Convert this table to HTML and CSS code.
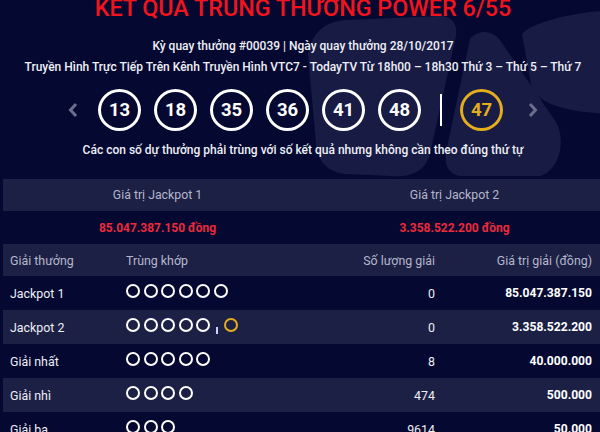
FILE: index.html
```html
<!DOCTYPE html>
<html lang="vi">
<head>
<meta charset="utf-8">
<title>Kết quả Power 6/55</title>
<link rel="stylesheet" href="styles.css">
</head>
<body>
<div class="page">
  <svg class="deco" width="600" height="432" viewBox="0 0 600 432" aria-hidden="true">
    <path d="M308,60 C312,38 325,28 345,26 L440,22 C452,22 458,30 456,42 L430,160 C425,178 410,184 390,182 L345,180 C328,178 318,168 316,150 Z" fill="#181b44"/>
    <path d="M470,45 C478,35 492,36 500,46 L556,128 C566,146 560,176 540,182 L460,182 C448,180 444,170 446,158 Z" fill="#181b44"/>
    <path d="M522,40 C530,30 560,22 590,18 L610,16 L610,120 L585,118 C560,115 540,108 532,96 Z" fill="#181b44"/>
  </svg>
  <div class="content">
    <h1 class="title">KẾT QUẢ TRÚNG THƯỞNG POWER 6/55</h1>
    <p class="info">Kỳ quay thưởng #00039 | Ngày quay thưởng 28/10/2017</p>
    <p class="info">Truyền Hình Trực Tiếp Trên Kênh Truyền Hình VTC7 - TodayTV Từ 18h00 – 18h30 Thứ 3 – Thứ 5 – Thứ 7</p>
    <div class="balls">
      <svg class="arrow arrow-left" width="10" height="16" viewBox="0 0 10 16"><path d="M8,2 L2.5,8 L8,14" fill="none" stroke="#6b6e8c" stroke-width="3"/></svg>
      <div class="ball-list">
        <span class="ball">13</span>
        <span class="ball">18</span>
        <span class="ball">35</span>
        <span class="ball">36</span>
        <span class="ball">41</span>
        <span class="ball">48</span>
      </div>
      <span class="sep"></span>
      <span class="ball ball-gold">47</span>
      <svg class="arrow arrow-right" width="10" height="16" viewBox="0 0 10 16"><path d="M2,2 L7.5,8 L2,14" fill="none" stroke="#6b6e8c" stroke-width="3"/></svg>
    </div>
    <p class="note">Các con số dự thưởng phải trùng với số kết quả nhưng không cần theo đúng thứ tự</p>

    <div class="jp-head">
      <div>Giá trị Jackpot 1</div>
      <div>Giá trị Jackpot 2</div>
    </div>
    <div class="jp-values">
      <div>85.047.387.150 đồng</div>
      <div>3.358.522.200 đồng</div>
    </div>

    <div class="table">
      <div class="row row-head">
        <div>Giải thưởng</div>
        <div>Trùng khớp</div>
        <div class="num">Số lượng giải</div>
        <div class="num">Giá trị giải (đồng)</div>
      </div>
      <div class="row">
        <div>Jackpot 1</div>
        <div class="dots"><i></i><i></i><i></i><i></i><i></i><i></i></div>
        <div class="num">0</div>
        <div class="num val">85.047.387.150</div>
      </div>
      <div class="row alt">
        <div>Jackpot 2</div>
        <div class="dots"><i></i><i></i><i></i><i></i><i></i><b class="bar"></b><i class="gold"></i></div>
        <div class="num">0</div>
        <div class="num val">3.358.522.200</div>
      </div>
      <div class="row">
        <div>Giải nhất</div>
        <div class="dots"><i></i><i></i><i></i><i></i><i></i></div>
        <div class="num">8</div>
        <div class="num val">40.000.000</div>
      </div>
      <div class="row alt">
        <div>Giải nhì</div>
        <div class="dots"><i></i><i></i><i></i><i></i></div>
        <div class="num">474</div>
        <div class="num val">500.000</div>
      </div>
      <div class="row">
        <div>Giải ba</div>
        <div class="dots"><i></i><i></i><i></i></div>
        <div class="num">9614</div>
        <div class="num val">50.000</div>
      </div>
    </div>
  </div>
</div>
</body>
</html>
```

FILE: styles.css
```css
html, body {
  margin: 0;
  padding: 0;
  background: #050830;
  overflow: hidden;
}
body {
  font-family: Roboto, "Noto Sans", sans-serif;
  color: #eceef5;
  width: 600px;
  height: 432px;
}
.page {
  position: relative;
  width: 600px;
  margin-left: 3px;
}
.deco {
  position: absolute;
  left: -3px;
  top: 0;
  z-index: 0;
}
.content {
  position: relative;
  z-index: 1;
}
.title {
  margin: -6px 0 0;
  font-size: 23.3px;
  line-height: 28px;
  font-weight: 500;
  color: #f2141c;
  text-align: center;
}
.info {
  margin: 0;
  font-size: 12px;
  line-height: 21px;
  font-weight: 500;
  text-align: center;
  color: #eef0f7;
}
.title + .info {
  margin-top: 14px;
}
.balls {
  display: flex;
  align-items: center;
  justify-content: center;
  margin-top: 11px;
  height: 42px;
}
.arrow {
  display: block;
}
.arrow-left {
  margin-right: 20px;
}
.arrow-right {
  margin-left: 25px;
}
.ball-list {
  display: flex;
  gap: 13px;
}
.ball {
  box-sizing: border-box;
  width: 43px;
  height: 42px;
  border: 3px solid #ffffff;
  border-radius: 50%;
  display: flex;
  align-items: center;
  justify-content: center;
  font-size: 18.5px;
  font-weight: 700;
  color: #ffffff;
}
.ball-gold {
  border-color: #e3ad1c;
  color: #e3ad1c;
}
.sep {
  width: 2px;
  height: 32px;
  background: #ffffff;
  margin: 0 18px 0 19px;
}
.note {
  margin: 10px 0 0;
  font-size: 12px;
  line-height: 18px;
  font-weight: 500;
  text-align: center;
  color: #eef0f7;
}
.jp-head {
  margin-top: 20px;
  height: 32px;
  background: #1d2045;
  display: grid;
  grid-template-columns: 1fr 1fr;
  padding-left: 6px;
  align-items: center;
  text-align: center;
  font-size: 12.3px;
  color: #b4b7cb;
}
.jp-values {
  height: 33px;
  display: grid;
  grid-template-columns: 1fr 1fr;
  padding-left: 6px;
  align-items: center;
  text-align: center;
  font-size: 12px;
  font-weight: 700;
  color: #ec2a3c;
}
.row {
  display: grid;
  grid-template-columns: 116px 207px 102px 157px;
  padding: 0 11px 0 7px;
  height: 34px;
  align-items: center;
  font-size: 12.4px;
  color: #eceef5;
}
.row-head {
  height: 32px;
  background: #1d2045;
  color: #b4b7cb;
}
.alt {
  background: #1d2045;
}
.num {
  text-align: right;
}
.val {
  font-size: 12.1px;
  font-weight: 700;
  color: #ffffff;
}
.dots {
  display: flex;
  align-items: center;
  gap: 3.5px;
  margin-top: -4px;
}
.dots i {
  box-sizing: border-box;
  display: block;
  width: 14px;
  height: 14px;
  border: 2.2px solid #ffffff;
  border-radius: 50%;
}
.dots i.gold {
  border-color: #e3ad1c;
}
.dots .bar {
  display: block;
  width: 2px;
  height: 7px;
  background: #c9d2ff;
  margin: 10px 3px 0 2px;
}
```
